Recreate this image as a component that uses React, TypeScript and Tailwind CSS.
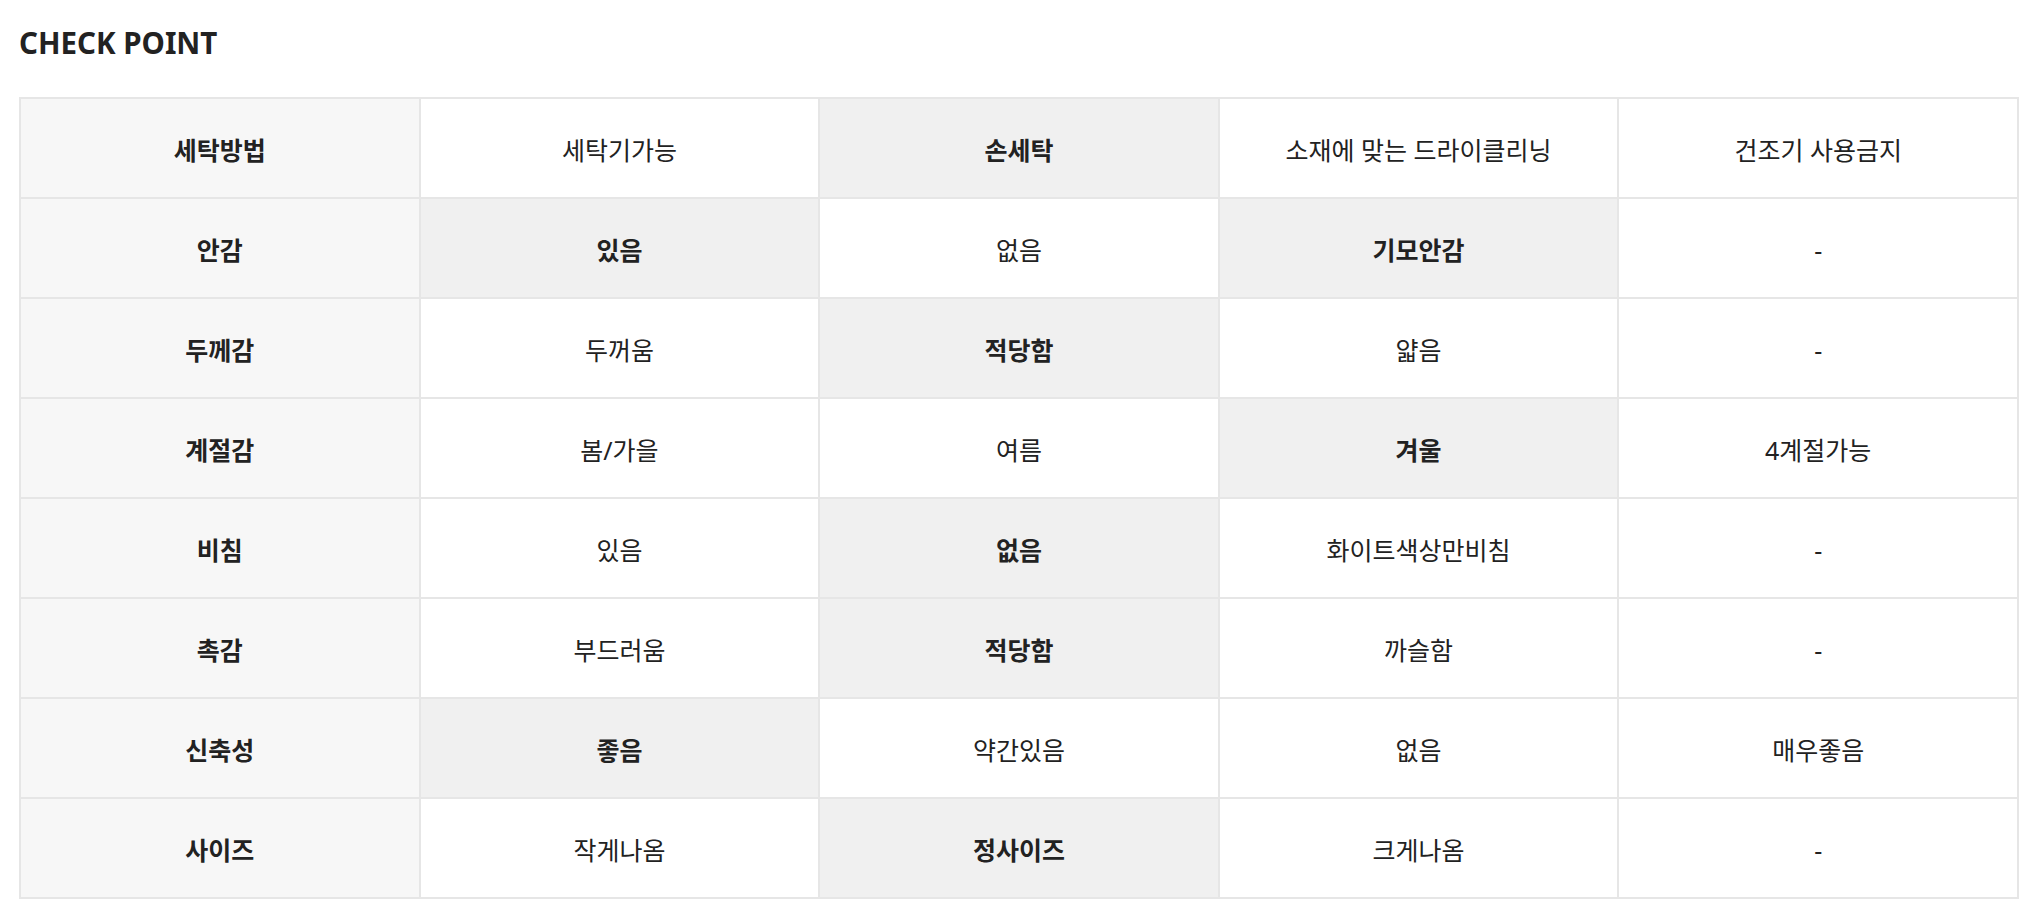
import React from "react";

type Cell = { text: string; on?: boolean };

const rows: Cell[][] = [
  [{ text: "세탁방법" }, { text: "세탁기가능" }, { text: "손세탁", on: true }, { text: "소재에 맞는 드라이클리닝" }, { text: "건조기 사용금지" }],
  [{ text: "안감" }, { text: "있음", on: true }, { text: "없음" }, { text: "기모안감", on: true }, { text: "-" }],
  [{ text: "두께감" }, { text: "두꺼움" }, { text: "적당함", on: true }, { text: "얇음" }, { text: "-" }],
  [{ text: "계절감" }, { text: "봄/가을" }, { text: "여름" }, { text: "겨울", on: true }, { text: "4계절가능" }],
  [{ text: "비침" }, { text: "있음" }, { text: "없음", on: true }, { text: "화이트색상만비침" }, { text: "-" }],
  [{ text: "촉감" }, { text: "부드러움" }, { text: "적당함", on: true }, { text: "까슬함" }, { text: "-" }],
  [{ text: "신축성" }, { text: "좋음", on: true }, { text: "약간있음" }, { text: "없음" }, { text: "매우좋음" }],
  [{ text: "사이즈" }, { text: "작게나옴" }, { text: "정사이즈", on: true }, { text: "크게나옴" }, { text: "-" }],
];

export default function App() {
  return (
    <div className="min-h-screen bg-white pl-[19px] pt-[23px] text-[#222] [font-family:'Noto_Sans','Noto_Sans_CJK_KR',sans-serif]">
      <h2 className="text-[29.5px] font-bold leading-[40px]">CHECK POINT</h2>

      <div className="mt-[34px] grid w-[2000px] grid-cols-5 gap-[2px] bg-[#e6e6e6] p-[2px]">
        {rows.map((row, r) =>
          row.map((cell, c) => {
            const head = c === 0;
            const bg = head ? "bg-[#f7f7f7]" : cell.on ? "bg-[#f0f0f0]" : "bg-white";
            return (
              <div
                key={`${r}-${c}`}
                className={`flex h-[98px] items-center justify-center pt-[5px] text-[25px] ${bg} ${
                  head || cell.on ? "font-bold" : "font-normal"
                }`}
              >
                {cell.text}
              </div>
            );
          })
        )}
      </div>
    </div>
  );
}
